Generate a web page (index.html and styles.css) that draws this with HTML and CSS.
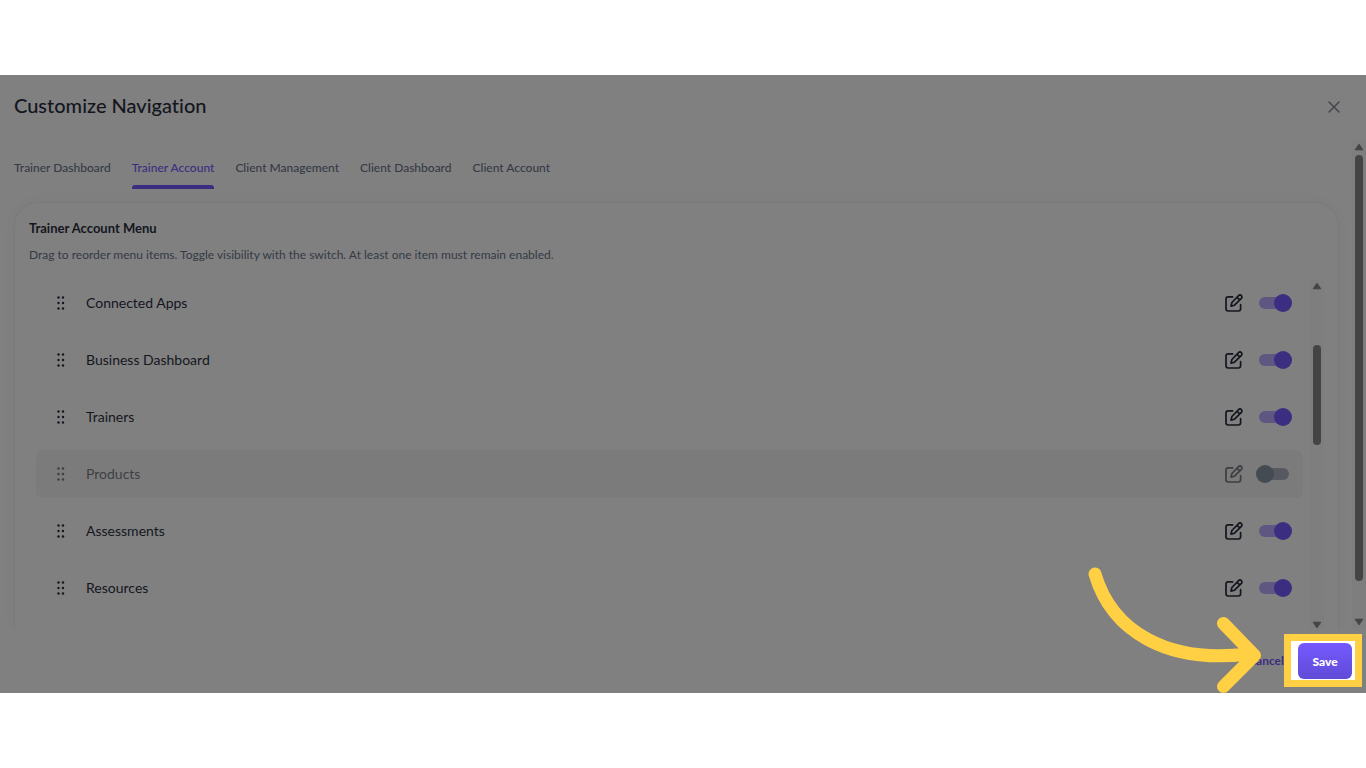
FILE: index.html
```html
<!DOCTYPE html>
<html lang="en">
<head>
<meta charset="utf-8">
<meta name="viewport" content="width=device-width, initial-scale=1">
<title>Customize Navigation</title>
<link rel="stylesheet" href="styles.css">
</head>
<body>
<svg class="defs" aria-hidden="true">
  <symbol id="edit" viewBox="0 0 18 18">
    <path d="M7.6 2.9H3.2a2.2 2.2 0 0 0-2.2 2.2v9.7a2.2 2.2 0 0 0 2.2 2.2h10.2a2.2 2.2 0 0 0 2.2-2.2v-4.1M6 12.1l.9-3.6 6.7-6.9a1.900 1.900 0 0 1 2.800 2.700l-6.900 6.900zM12 3.300l2.800 2.600"/>
  </symbol>
  <symbol id="grip" viewBox="0 0 8 16">
    <circle cx="1.5" cy="2.5" r="1.2"/><circle cx="6" cy="2.5" r="1.2"/>
    <circle cx="1.5" cy="8" r="1.2"/><circle cx="6" cy="8" r="1.2"/>
    <circle cx="1.5" cy="13.5" r="1.2"/><circle cx="6" cy="13.5" r="1.2"/>
  </symbol>
  <symbol id="up" viewBox="0 0 10 8">
    <path d="M5 1.2 8.8 6.8H1.2z"/>
  </symbol>
  <symbol id="down" viewBox="0 0 10 8">
    <path d="M1.2 1.2h7.6L5 6.8z"/>
  </symbol>
</svg>

<main class="dialog">
  <header class="header">
    <h1 class="title">Customize Navigation</h1>
    <button class="close" type="button" aria-label="Close">
      <svg viewBox="0 0 12 12"><path d="M1 1l10 10M11 1 1 11"/></svg>
    </button>
  </header>

  <div class="body">
    <div class="content">
      <nav class="tabs">
        <button class="tab" type="button">Trainer Dashboard</button>
        <button class="tab tab-active" type="button">Trainer Account</button>
        <button class="tab" type="button">Client Management</button>
        <button class="tab" type="button">Client Dashboard</button>
        <button class="tab" type="button">Client Account</button>
      </nav>

      <section class="card">
        <h2 class="card-title">Trainer Account Menu</h2>
        <p class="card-text">Drag to reorder menu items. Toggle visibility with the switch. At least one item must remain enabled.</p>
        <div class="scroller">
          <ul class="list">
            <li class="row">
              <svg class="grip"><use href="#grip"/></svg>
              <label class="name" for="s1">Connected Apps</label>
              <button class="edit" type="button" aria-label="Edit Connected Apps"><svg><use href="#edit"/></svg></button>
              <input class="switch" id="s1" type="checkbox" checked>
            </li>
            <li class="row">
              <svg class="grip"><use href="#grip"/></svg>
              <label class="name" for="s2">Business Dashboard</label>
              <button class="edit" type="button" aria-label="Edit Business Dashboard"><svg><use href="#edit"/></svg></button>
              <input class="switch" id="s2" type="checkbox" checked>
            </li>
            <li class="row">
              <svg class="grip"><use href="#grip"/></svg>
              <label class="name" for="s3">Trainers</label>
              <button class="edit" type="button" aria-label="Edit Trainers"><svg><use href="#edit"/></svg></button>
              <input class="switch" id="s3" type="checkbox" checked>
            </li>
            <li class="row row-off">
              <svg class="grip"><use href="#grip"/></svg>
              <label class="name" for="s4">Products</label>
              <button class="edit" type="button" aria-label="Edit Products"><svg><use href="#edit"/></svg></button>
              <input class="switch" id="s4" type="checkbox">
            </li>
            <li class="row">
              <svg class="grip"><use href="#grip"/></svg>
              <label class="name" for="s5">Assessments</label>
              <button class="edit" type="button" aria-label="Edit Assessments"><svg><use href="#edit"/></svg></button>
              <input class="switch" id="s5" type="checkbox" checked>
            </li>
            <li class="row">
              <svg class="grip"><use href="#grip"/></svg>
              <label class="name" for="s6">Resources</label>
              <button class="edit" type="button" aria-label="Edit Resources"><svg><use href="#edit"/></svg></button>
              <input class="switch" id="s6" type="checkbox" checked>
            </li>
          </ul>
          <div class="bar" aria-hidden="true">
            <svg class="bar-arrow"><use href="#up"/></svg>
            <div class="bar-track bar-track-inner"><div class="bar-thumb bar-thumb-inner"></div></div>
            <svg class="bar-arrow"><use href="#down"/></svg>
          </div>
        </div>
      </section>
    </div>
    <div class="bar bar-outer" aria-hidden="true">
      <svg class="bar-arrow"><use href="#up"/></svg>
      <div class="bar-track bar-track-outer"><div class="bar-thumb bar-thumb-outer"></div></div>
      <svg class="bar-arrow"><use href="#down"/></svg>
    </div>
  </div>

  <footer class="footer">
    <button class="cancel" type="button">Cancel</button>
    <div class="spotlight">
      <button class="save" type="button">Save</button>
      <svg class="pointer" viewBox="0 0 178 130" aria-hidden="true">
        <path d="M10 10C27 68 83 100 163 90M138.5 59.5 169.5 91.5 138.5 122.5"/>
      </svg>
    </div>
  </footer>
</main>
</body>
</html>
```
FILE: styles.css
```css
* {
  box-sizing: border-box;
}

body {
  margin: 0;
  min-height: 100vh;
  display: flex;
  flex-direction: column;
  justify-content: center;
  background: #fff;
  font-family: Lato, "Open Sans", sans-serif;
  font-variant-ligatures: none;
  color: #14161e;
}

button {
  padding: 0;
  border: 0;
  background: none;
  font: inherit;
  color: inherit;
  cursor: pointer;
}

h1, h2, p, ul {
  margin: 0;
  padding: 0;
}

.defs {
  position: absolute;
  width: 0;
  height: 0;
}

.dialog {
  background: #808080;
  overflow: hidden;
}

.header {
  display: flex;
  align-items: center;
  justify-content: space-between;
  padding: 15px 26px 21px 14px;
}

.title {
  font-size: 20px;
  line-height: 30px;
  font-weight: 500;
}

.close {
  display: flex;
  padding-top: 4px;
}

.close svg {
  width: 12px;
  height: 12px;
  fill: none;
  stroke: #44464a;
  stroke-width: 1.5;
  stroke-linecap: round;
}

.body {
  display: flex;
  overflow: hidden;
}

.content {
  flex: 1;
  min-width: 0;
  padding: 14px 14px 0;
}

.tabs {
  display: flex;
  gap: 21px;
  margin-bottom: 13px;
}

.tab {
  padding: 4px 0 8px;
  border-bottom: 4px solid transparent;
  font-size: 12px;
  line-height: 18px;
  font-weight: 500;
  color: #353a44;
}

.tab-active {
  position: relative;
  color: #3b2d80;
}

.tab-active::after {
  content: "";
  position: absolute;
  left: 0;
  right: 0;
  bottom: -4px;
  height: 4px;
  border-radius: 3px 3px 0 0;
  background: #3b2d80;
}

.card {
  padding: 15px 14px 0;
  border: 1px solid #7a7a7a;
  border-bottom: 0;
  border-radius: 24px 24px 0 0;
  box-shadow: 0 0 14px rgba(0, 0, 0, 0.03);
}

.card-title {
  font-size: 13px;
  line-height: 20px;
  font-weight: 700;
}

.card-text {
  margin: 7px 0 14px;
  font-size: 12px;
  line-height: 20px;
  color: #353a44;
}

.scroller {
  display: flex;
  gap: 7px;
  padding-left: 7px;
}

.list {
  flex: 1;
  display: flex;
  flex-direction: column;
  gap: 9px;
  padding-bottom: 17px;
  list-style: none;
}

.row {
  display: flex;
  align-items: center;
  height: 48px;
  padding: 0 14px 0 21px;
  border-radius: 7px;
}

.row-off {
  background: #7b7b7b;
}

.grip {
  width: 8px;
  height: 16px;
  margin-right: 21px;
  fill: #14161e;
}

.name {
  flex: 1;
  font-size: 14px;
  line-height: 20px;
}

.edit {
  display: flex;
  margin-right: 16px;
}

.edit svg {
  width: 18px;
  height: 18px;
  fill: none;
  stroke: #14161e;
  stroke-width: 1.7;
  stroke-linecap: round;
  stroke-linejoin: round;
}

.row-off .name,
.row-off .grip,
.row-off .edit {
  opacity: 0.6;
}

.switch {
  appearance: none;
  position: relative;
  width: 30px;
  height: 12px;
  margin: 0;
  border-radius: 6px;
  background: #56595f;
  cursor: pointer;
}

.switch::before {
  content: "";
  position: absolute;
  top: -3px;
  left: -3px;
  width: 18px;
  height: 18px;
  border-radius: 50%;
  background: #454b53;
}

.switch:checked {
  background: #5f5782;
}

.switch:checked::before {
  left: 15px;
  background: #3b2d80;
}

.bar {
  display: flex;
  flex-direction: column;
  align-items: center;
  width: 14px;
  padding-top: 3px;
  background: #7e7e7e;
}

.bar-outer {
  padding: 2px 0 3px;
  margin-left: -1px;
}

.bar-arrow {
  width: 10px;
  height: 8px;
  fill: #444;
  stroke: #444;
  stroke-width: 1;
  stroke-linejoin: round;
}

.bar-track {
  flex: 1;
  width: 8px;
}

.bar-track-inner {
  padding-top: 55px;
}

.bar-track-outer {
  padding-top: 4px;
}

.bar-thumb {
  border-radius: 4px;
  background: #444;
}

.bar-thumb-inner {
  height: 100px;
}

.bar-thumb-outer {
  height: 92%;
}

.footer {
  display: flex;
  justify-content: flex-end;
  align-items: center;
  padding: 5px 4px 6px;
}

.cancel {
  font-size: 12px;
  line-height: 18px;
  font-weight: 700;
  color: #3b2d80;
}

.spotlight {
  position: relative;
  padding: 2px 3px 1px 7px;
  border: 7px solid #ffd043;
  background: #fff;
}

.save {
  display: block;
  min-width: 54px;
  height: 36px;
  padding: 0 14px;
  border-radius: 6px;
  background: linear-gradient(#7559ff, #604bd6);
  font-size: 12px;
  font-weight: 900;
  color: #fff;
}

.pointer {
  position: absolute;
  right: 92px;
  bottom: -14px;
  width: 178px;
  height: 130px;
  fill: none;
  stroke: #ffd043;
  stroke-width: 13;
  stroke-linecap: round;
  stroke-linejoin: round;
  pointer-events: none;
}
```
